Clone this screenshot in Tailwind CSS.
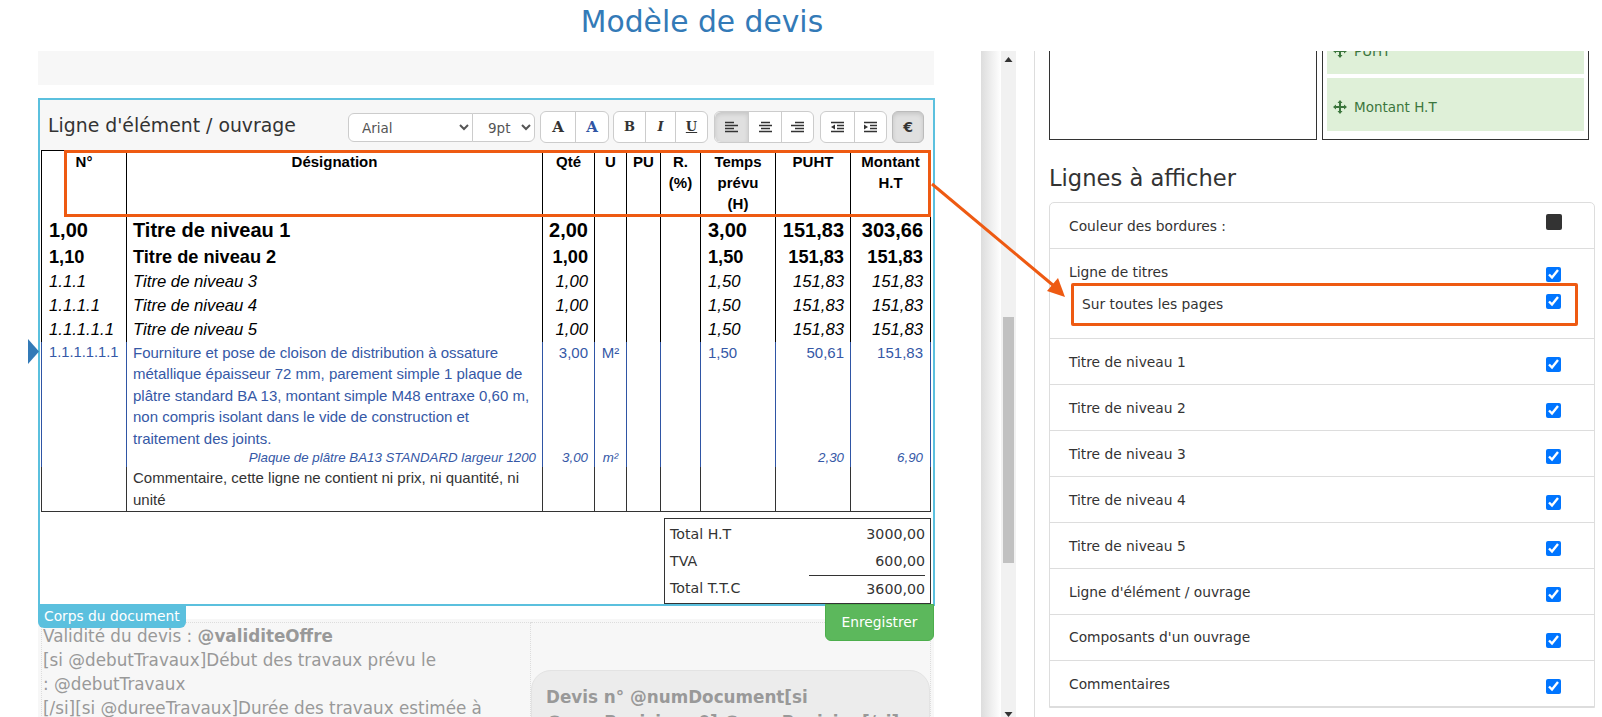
<!DOCTYPE html>
<html lang="fr">
<head>
  <meta charset="UTF-8" />
  <title>Modèle de devis</title>
  <script src="https://cdn.jsdelivr.net/npm/@tailwindcss/browser@4"></script>
</head>
<body class="relative h-[717px] w-[1602px] overflow-hidden bg-white font-['DejaVu_Sans',sans-serif] text-[#333]">
  <h1 class="h-[51px] w-[1404px] pt-[3px] text-center text-[29.75px] leading-[38px] text-[#337ab7]">Modèle de devis</h1>

  <main class="flex h-[666px]">
    <!-- Colonne document -->
    <section class="relative h-full w-[981px] shrink-0 pl-[38px]">
      <div class="h-[34px] w-[896px] bg-[#f7f7f7]"></div>

      <div class="relative mt-[13px] h-[508px] w-[897px] border-2 border-[#5bc0de] bg-white">
        <!-- Barre d'outils -->
        <div class="flex h-[50px] items-start bg-[#f7f7f7] pl-[8px]">
          <h2 class="mt-[12px] w-[300px] text-[18.85px] leading-[27px]">Ligne d'élément / ouvrage</h2>
          <div class="mt-[13px] flex">
            <select class="h-[29px] w-[125px] rounded-l-[6px] border border-[#ccc] bg-white pl-[9px] text-[13.5px] text-[#555]"><option>Arial</option></select>
            <select class="-ml-px h-[29px] w-[63px] rounded-r-[6px] border border-[#ccc] bg-white pl-[11px] text-[13.5px] text-[#555]"><option>9pt</option></select>
          </div>
          <div class="mt-[11px] ml-[5px] flex h-[32px] rounded-[6px] border border-[#ccc] bg-white font-['DejaVu_Serif',serif] text-[15px] font-bold">
            <button class="w-[34px]">A</button>
            <button class="w-[33px] border-l border-[#ccc] text-[#2f55a4]">A</button>
          </div>
          <div class="mt-[11px] ml-[4px] flex h-[32px] rounded-[6px] border border-[#ccc] bg-white font-['DejaVu_Serif',serif] text-[13px] font-bold">
            <button class="w-[31px]">B</button>
            <button class="w-[30px] border-l border-[#ccc] italic">I</button>
            <button class="w-[32px] border-l border-[#ccc] underline">U</button>
          </div>
          <div class="mt-[11px] ml-[6px] flex h-[32px] rounded-[6px] border border-[#ccc] bg-white">
            <button class="flex w-[33px] items-center justify-center rounded-l-[6px] bg-[#e0e0e0] shadow-[inset_0_2px_4px_rgba(0,0,0,0.12)]">
              <svg width="13" height="12" viewBox="0 0 13 12"><path d="M0 1.500h9M0 4.500h13M0 7.500h9M0 10.500h13" stroke="#333" stroke-width="1.300"/></svg>
            </button>
            <button class="flex w-[33px] items-center justify-center border-l border-[#ccc]">
              <svg width="13" height="12" viewBox="0 0 13 12"><path d="M2 1.500h9M0 4.500h13M2 7.500h9M0 10.500h13" stroke="#333" stroke-width="1.300"/></svg>
            </button>
            <button class="flex w-[32px] items-center justify-center border-l border-[#ccc]">
              <svg width="13" height="12" viewBox="0 0 13 12"><path d="M4 1.500h9M0 4.500h13M4 7.500h9M0 10.500h13" stroke="#333" stroke-width="1.300"/></svg>
            </button>
          </div>
          <div class="mt-[11px] ml-[6px] flex h-[32px] rounded-[6px] border border-[#ccc] bg-white">
            <button class="flex w-[33px] items-center justify-center">
              <svg width="13" height="12" viewBox="0 0 13 12"><path d="M0 1.500h13M6 4.500h7M6 7.500h7M0 10.500h13" stroke="#333" stroke-width="1.300"/><path d="M4 3.500v5L0 6z" fill="#333"/></svg>
            </button>
            <button class="flex w-[32px] items-center justify-center border-l border-[#ccc]">
              <svg width="13" height="12" viewBox="0 0 13 12"><path d="M0 1.500h13M6 4.500h7M6 7.500h7M0 10.500h13" stroke="#333" stroke-width="1.300"/><path d="M0 3.500v5L4 6z" fill="#333"/></svg>
            </button>
          </div>
          <button class="mt-[11px] ml-[5px] h-[32px] w-[32px] rounded-[6px] border border-[#bbb] bg-[#e0e0e0] text-[14px] font-bold shadow-[inset_0_2px_4px_rgba(0,0,0,0.12)]">€</button>
        </div>

        <!-- Tableau des lignes -->
        <table class="ml-px w-[889px] table-fixed border-collapse border-t border-b border-t-black border-b-[#333] font-['Liberation_Sans',sans-serif]">
          <colgroup>
            <col class="w-[85px]" /><col class="w-[416px]" /><col class="w-[52px]" /><col class="w-[32px]" /><col class="w-[34px]" /><col class="w-[40px]" /><col class="w-[75px]" /><col class="w-[75px]" /><col class="w-[80px]" />
          </colgroup>
          <tr class="h-[66px] align-top text-[15px] leading-[21px] font-bold text-black *:border-x *:border-black *:text-center">
            <td>N°</td><td>Désignation</td><td>Qté</td><td>U</td><td>PU</td><td class="px-[6px]">R. (%)</td><td class="px-[6px]">Temps prévu (H)</td><td>PUHT</td><td class="px-[6px]">Montant H.T</td>
          </tr>
          <tr class="h-[27px] align-top text-[20px] leading-[27px] font-bold text-black *:border-x *:border-black">
            <td class="pl-[7px]">1,00</td><td class="pl-[6px]">Titre de niveau 1</td><td class="pr-[6px] text-right">2,00</td><td></td><td></td><td></td><td class="pl-[7px]">3,00</td><td class="pr-[6px] text-right">151,83</td><td class="pr-[7px] text-right">303,66</td>
          </tr>
          <tr class="h-[26px] align-top text-[18.2px] leading-[26px] font-bold text-black *:border-x *:border-black">
            <td class="pl-[7px]">1,10</td><td class="pl-[6px]">Titre de niveau 2</td><td class="pr-[6px] text-right">1,00</td><td></td><td></td><td></td><td class="pl-[7px]">1,50</td><td class="pr-[6px] text-right">151,83</td><td class="pr-[7px] text-right">151,83</td>
          </tr>
          <tr class="h-[24px] align-top text-[16.7px] leading-[24px] text-black italic *:border-x *:border-black">
            <td class="pl-[7px]">1.1.1</td><td class="pl-[6px]">Titre de niveau 3</td><td class="pr-[6px] text-right">1,00</td><td></td><td></td><td></td><td class="pl-[7px]">1,50</td><td class="pr-[6px] text-right">151,83</td><td class="pr-[7px] text-right">151,83</td>
          </tr>
          <tr class="h-[23px] align-top text-[16.7px] leading-[23px] text-black italic *:border-x *:border-black">
            <td class="pl-[7px]">1.1.1.1</td><td class="pl-[6px]">Titre de niveau 4</td><td class="pr-[6px] text-right">1,00</td><td></td><td></td><td></td><td class="pl-[7px]">1,50</td><td class="pr-[6px] text-right">151,83</td><td class="pr-[7px] text-right">151,83</td>
          </tr>
          <tr class="h-[25px] align-top text-[16.7px] leading-[25px] text-black italic *:border-x *:border-black">
            <td class="pl-[7px]">1.1.1.1.1</td><td class="pl-[6px]">Titre de niveau 5</td><td class="pr-[6px] text-right">1,00</td><td></td><td></td><td></td><td class="pl-[7px]">1,50</td><td class="pr-[6px] text-right">151,83</td><td class="pr-[7px] text-right">151,83</td>
          </tr>
          <tr class="align-top text-[15px] leading-[21.5px] text-[#3558a6] *:border-x *:border-[#2f55a4]">
            <td class="pl-[7px] text-[14.7px]">1.1.1.1.1.1</td><td class="px-[6px]">Fourniture et pose de cloison de distribution à ossature métallique épaisseur 72 mm, parement simple 1 plaque de plâtre standard BA 13, montant simple M48 entraxe 0,60 m, non compris isolant dans le vide de construction et traitement des joints.</td><td class="pr-[6px] text-right">3,00</td><td class="text-center">M²</td><td></td><td></td><td class="pl-[7px]">1,50</td><td class="pr-[6px] text-right">50,61</td><td class="pr-[7px] text-right">151,83</td>
          </tr>
          <tr class="h-[18px] align-top text-[13.3px] leading-[18px] text-[#3558a6] italic *:border-x *:border-[#2f55a4]">
            <td></td><td class="pr-[6px] text-right">Plaque de plâtre BA13 STANDARD largeur 1200</td><td class="pr-[6px] text-right">3,00</td><td class="text-center">m²</td><td></td><td></td><td></td><td class="pr-[6px] text-right">2,30</td><td class="pr-[7px] text-right">6,90</td>
          </tr>
          <tr class="h-[44px] align-top text-[15px] leading-[22px] text-[#333] *:border-x *:border-[#333]">
            <td></td><td class="px-[6px]">Commentaire, cette ligne ne contient ni prix, ni quantité, ni unité</td><td></td><td></td><td></td><td></td><td></td><td></td><td></td>
          </tr>
        </table>

        <!-- Totaux -->
        <div class="mt-[6px] ml-[624px] h-[86px] w-[267px] border border-[#333] pt-[2px] pr-[5px] pl-[5px] text-[14.2px] leading-[27px]">
          <div class="flex justify-between"><span>Total H.T</span><span>3000,00</span></div>
          <div class="flex justify-between"><span>TVA</span><span>600,00</span></div>
          <div class="flex justify-between"><span>Total T.T.C</span><span class="w-[116px] border-t border-[#333] text-right">3600,00</span></div>
        </div>

        <span class="absolute -bottom-[24px] -left-[2px] z-10 rounded-b-[6px] bg-[#5bc0de] px-[6px] pt-px text-[13.8px] leading-[23px] text-white">Corps du document</span>
        <button class="absolute -right-[1px] -bottom-[37px] z-10 h-[37px] w-[109px] rounded-b-[6px] border border-[#4cae4c] bg-[#5cb85c] text-[13.8px] text-white">Enregistrer</button>
      </div>

      <!-- Triangle de la ligne active -->
      <svg class="absolute top-[288px] left-[28px]" width="11" height="25" viewBox="0 0 11 25"><path d="M0 0l11 12.500L0 25z" fill="#337ab7"/></svg>

      <!-- Pied du document -->
      <div class="mt-[13px] grid h-[120px] w-[896px] grid-cols-[490px_1fr] overflow-hidden bg-[#f7f7f7] px-[3px] pt-[3px] text-[16.8px] leading-[24px] text-[#999]">
        <div class="border border-dotted border-[#ddd] pt-[1px] pl-[1px]">
          <p>Validité du devis : <b>@validiteOffre</b></p>
          <p>[si @debutTravaux]Début des travaux prévu le</p>
          <p>: @debutTravaux</p>
          <p>[/si][si @dureeTravaux]Durée des travaux estimée à</p>
        </div>
        <div class="border-t border-r border-dotted border-[#ddd] pt-[47px]">
          <div class="h-[90px] rounded-[20px] border border-[#e3e3e3] bg-[#ececec] px-[14px] pt-[14px] font-bold leading-[25px]">Devis n° @numDocument[si @numRevision&gt;0] @numRevision[/si]</div>
        </div>
      </div>
    </section>

    <!-- Ascenseur -->
    <div class="h-full w-[20px] shrink-0 bg-linear-to-r from-[#ddd] to-white"></div>
    <div class="relative h-full w-[15px] shrink-0 bg-[#f1f1f1]">
      <svg class="absolute top-[6px] left-[3px]" width="9" height="5" viewBox="0 0 9 5"><path d="M0.500 5L4.500 0l4 5z" fill="#333"/></svg>
      <div class="absolute top-[266px] left-[2px] h-[246px] w-[11px] bg-[#c1c1c1]"></div>
      <svg class="absolute bottom-[0px] left-[3px]" width="9" height="5" viewBox="0 0 9 5"><path d="M0.500 0L4.500 5l4-5z" fill="#333"/></svg>
    </div>

    <!-- Colonne réglages -->
    <aside class="ml-[18px] h-full flex-1 overflow-hidden border-l border-[#ddd] pr-[8px] pl-[14px]">
      <div class="flex h-[89px] gap-[5px]">
        <div class="w-[268px] border-x border-b border-[#333]"></div>
        <div class="w-[267px] border-x border-b border-[#333] px-[4px]">
          <div class="flex h-[23px] items-start gap-[7px] overflow-hidden bg-[#dff0d8] pl-[6px] text-[13.5px] leading-[0px] text-[#3c763d]">
            <svg class="-mt-[7px] shrink-0" width="14" height="14" viewBox="0 0 14 14"><path d="M7 0l2.500 3H8v3h3V4.500l3 2.500-3 2.500V8H8v3h1.500L7 14l-2.500-3H6V8H3v1.500L0 7l3-2.500V6h3V3H4.500z" fill="#3c763d"/></svg>
            <span>PUHT</span>
          </div>
          <div class="mt-[4px] flex h-[53px] items-center gap-[7px] bg-[#dff0d8] pt-[5px] pl-[6px] text-[13.5px] text-[#3c763d]">
            <svg class="shrink-0" width="14" height="14" viewBox="0 0 14 14"><path d="M7 0l2.500 3H8v3h3V4.500l3 2.500-3 2.500V8H8v3h1.500L7 14l-2.500-3H6V8H3v1.500L0 7l3-2.500V6h3V3H4.500z" fill="#3c763d"/></svg>
            <span>Montant H.T</span>
          </div>
        </div>
      </div>
      <h3 class="mt-[20px] text-[22.6px] leading-[36px]">Lignes à afficher</h3>
      <ul class="mt-[6px] w-[546px] rounded-t-[5px] border border-[#ddd] text-[13.8px] leading-[20px]">
        <li class="flex h-[46px] items-start justify-between border-b border-[#ddd] pt-[13px] pr-[32px] pl-[19px]"><span>Couleur des bordures :</span><span class="-mt-[2px] h-[16px] w-[16px] rounded-[2px] bg-[#333]"></span></li>
        <li class="h-[90px] border-b border-[#ddd] pt-[13px] pr-[33px] pl-[19px]">
          <div class="flex items-start justify-between"><span>Ligne de titres</span><input type="checkbox" checked class="mt-[5px] h-[15px] w-[15px]" /></div>
          <div class="mt-[12px] flex items-start justify-between pl-[13px]"><span>Sur toutes les pages</span><input type="checkbox" checked class="h-[15px] w-[15px]" /></div>
        </li>
        <li class="flex h-[46px] items-start justify-between border-b border-[#ddd] pt-[13px] pr-[33px] pl-[19px]"><span>Titre de niveau 1</span><input type="checkbox" checked class="mt-[5px] h-[15px] w-[15px]" /></li>
        <li class="flex h-[46px] items-start justify-between border-b border-[#ddd] pt-[13px] pr-[33px] pl-[19px]"><span>Titre de niveau 2</span><input type="checkbox" checked class="mt-[5px] h-[15px] w-[15px]" /></li>
        <li class="flex h-[46px] items-start justify-between border-b border-[#ddd] pt-[13px] pr-[33px] pl-[19px]"><span>Titre de niveau 3</span><input type="checkbox" checked class="mt-[5px] h-[15px] w-[15px]" /></li>
        <li class="flex h-[46px] items-start justify-between border-b border-[#ddd] pt-[13px] pr-[33px] pl-[19px]"><span>Titre de niveau 4</span><input type="checkbox" checked class="mt-[5px] h-[15px] w-[15px]" /></li>
        <li class="flex h-[46px] items-start justify-between border-b border-[#ddd] pt-[13px] pr-[33px] pl-[19px]"><span>Titre de niveau 5</span><input type="checkbox" checked class="mt-[5px] h-[15px] w-[15px]" /></li>
        <li class="flex h-[46px] items-start justify-between border-b border-[#ddd] pt-[13px] pr-[33px] pl-[19px]"><span>Ligne d'élément / ouvrage</span><input type="checkbox" checked class="mt-[5px] h-[15px] w-[15px]" /></li>
        <li class="flex h-[46px] items-start justify-between border-b border-[#ddd] pt-[12px] pr-[33px] pl-[19px]"><span>Composants d'un ouvrage</span><input type="checkbox" checked class="mt-[6px] h-[15px] w-[15px]" /></li>
        <li class="flex h-[46px] items-start justify-between border-b border-[#ddd] pt-[13px] pr-[33px] pl-[19px]"><span>Commentaires</span><input type="checkbox" checked class="mt-[5px] h-[15px] w-[15px]" /></li>
      </ul>
    </aside>
  </main>

  <!-- Annotations orange par-dessus la capture -->
  <div class="pointer-events-none absolute top-[150px] left-[64px] h-[67px] w-[867px] border-[3px] border-[#ee5a12]"></div>
  <div class="pointer-events-none absolute top-[283px] left-[1071px] h-[43px] w-[507px] rounded-[2px] border-[3px] border-[#ee5a12]"></div>
  <svg class="pointer-events-none absolute top-0 left-0" width="1602" height="717" viewBox="0 0 1602 717">
    <path d="M932 184L1054 286" stroke="#ee5a12" stroke-width="3" fill="none"/>
    <path d="M1065 297L1047 291L1058 278z" fill="#ee5a12"/>
  </svg>
</body>
</html>
